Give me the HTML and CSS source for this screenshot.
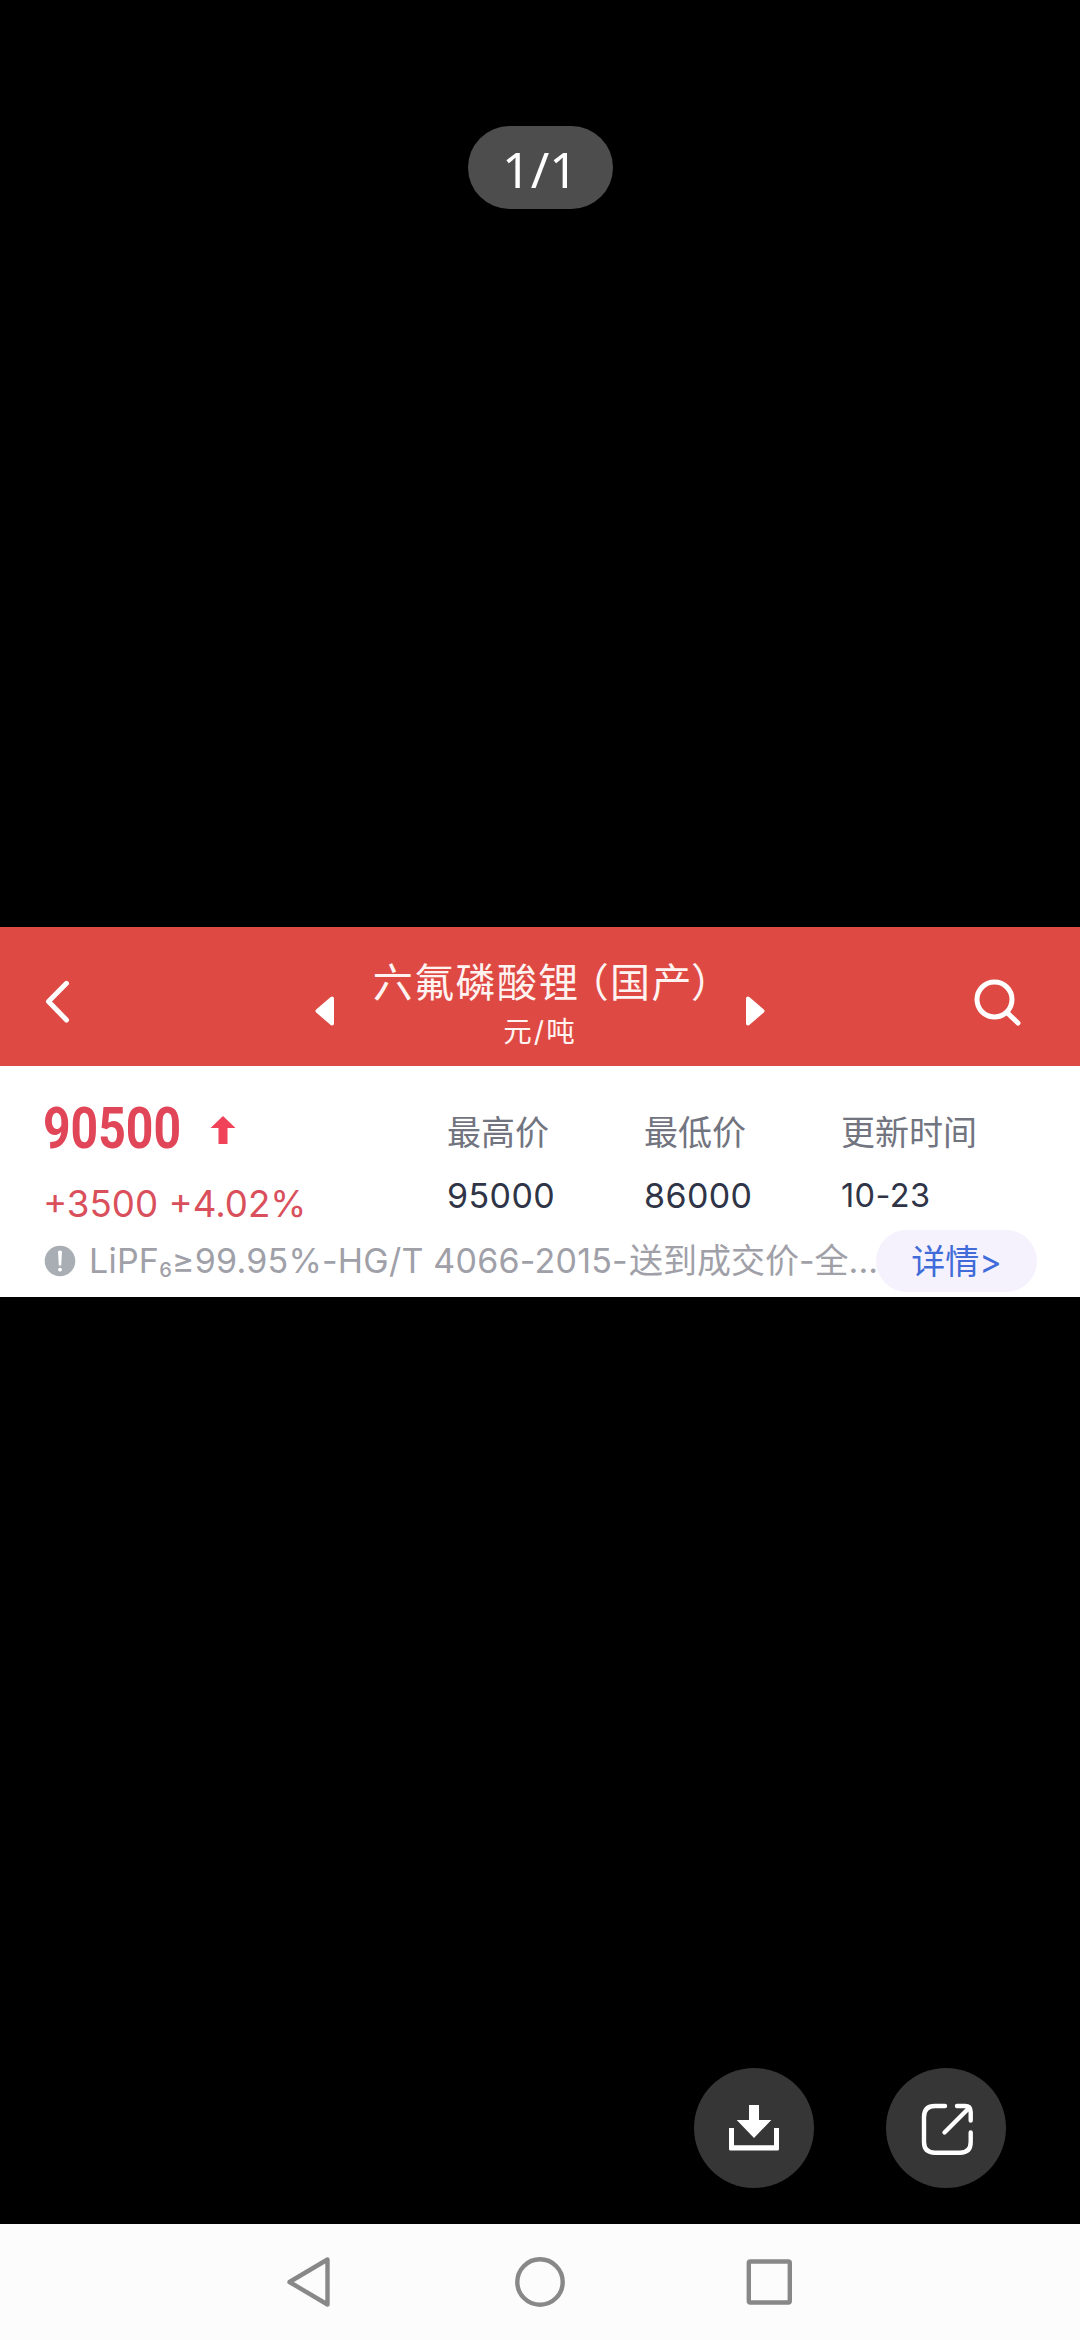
FILE: index.html
```html
<!DOCTYPE html>
<html lang="zh-CN">
<head>
    <meta charset="UTF-8">
    <title>六氟磷酸锂（国产）</title>
    <link rel="stylesheet" href="styles.css">
</head>
<body>

<div class="viewer">
    <div class="counter">1/1</div>

    <div class="photo">
        <div class="header">
            <svg class="back" width="32" height="48" viewBox="0 0 32 48">
                <path d="M26.5 5.3 L8.5 23.5 L26.5 42" />
            </svg>
            <svg class="prev" width="20" height="30" viewBox="0 0 20 30">
                <path d="M17 2.5 V27.5 L2.5 15 Z" />
            </svg>
            <div class="title">
                <div class="name">六氟磷酸锂<span class="open">（</span>国产<span class="close">）</span></div>
                <div class="unit">元/吨</div>
            </div>
            <svg class="next" width="20" height="30" viewBox="0 0 20 30">
                <path d="M3 2.5 V27.5 L17.5 15 Z" />
            </svg>
            <svg class="search" width="52" height="52" viewBox="0 0 52 52">
                <circle cx="20.5" cy="23.5" r="17.5" />
                <path d="M33.5 37 L44 47" />
            </svg>
        </div>

        <div class="quote">
            <div class="figures">
                <div class="current">
                    <div class="price">
                        <span class="value">90500</span>
                        <svg width="26" height="30" viewBox="0 0 26 30">
                            <path d="M13 1 L25.5 13 H17.5 V29 H8.5 V13 H0.5 Z" />
                        </svg>
                    </div>
                    <div class="change">+3500 +4.02%</div>
                </div>
                <dl class="stat">
                    <dt>最高价</dt>
                    <dd>95000</dd>
                </dl>
                <dl class="stat">
                    <dt>最低价</dt>
                    <dd>86000</dd>
                </dl>
                <dl class="stat time">
                    <dt>更新时间</dt>
                    <dd>10-23</dd>
                </dl>
            </div>
            <div class="spec">
                <svg width="32" height="32" viewBox="0 0 32 32">
                    <circle cx="16" cy="16" r="15.3" />
                    <path d="M14 6.5 Q16 4.5 18 6.5 L17.2 20.5 H14.8 Z" />
                    <circle class="dot" cx="16" cy="24.6" r="1.9" />
                </svg>
                <span class="spec-text">LiPF<span class="sub">6</span>≥99.95%-HG/T 4066-2015-<span class="terms">送到成交价-全...</span></span>
                <a class="more">详情&gt;</a>
            </div>
        </div>
    </div>

    <div class="actions">
        <button class="round">
            <svg width="120" height="120" viewBox="0 0 120 120">
                <path class="solid" d="M55 37 H65 V52 H77.3 L60 70 L42.7 52 H55 Z" />
                <path class="solid" d="M35 60 H40 V77.3 H80 V60 H85 V81 Q85 82.5 83.5 82.5 H36.5 Q35 82.5 35 81 Z" />
            </svg>
        </button>
        <button class="round">
            <svg width="120" height="120" viewBox="0 0 120 120">
                <path class="line" d="M59 38 H49 Q38 38 38 49 V74 Q38 84.7 49 84.7 H74 Q84.7 84.7 84.7 74 V64.5" />
                <path class="line" d="M71 38 H79 Q84.7 38 84.7 44 V52.5 M58.5 64.5 L83 40" />
            </svg>
        </button>
    </div>
</div>

<div class="navbar">
    <svg width="50" height="64" viewBox="0 0 50 64">
        <path d="M43.5 9.5 V54.5 L5.5 32 Z" />
    </svg>
    <svg width="54" height="64" viewBox="0 0 54 64">
        <circle cx="27" cy="32" r="22.7" />
    </svg>
    <svg width="50" height="64" viewBox="0 0 50 64">
        <rect x="2.8" y="11.5" width="41" height="41" rx="1.5" />
    </svg>
</div>

</body>
</html>
```
FILE: styles.css
```css
html, body {
    margin:  0;
    padding: 0;
}
body {
    display:        flex;
    flex-direction: column;
    width:          1080px;
    height:         2340px;
    background:     #000;
    font-family:    Inter, "Noto Sans CJK SC", sans-serif;
}
svg {
    display:     block;
    flex-shrink: 0;
}

.viewer {
    display:            grid;
    grid-template-rows: 1fr auto 1fr;
    flex:               1;
}
.counter {
    justify-self:   center;
    width:          145px;
    height:         83px;
    margin-top:     126px;
    line-height:    87px;
    border-radius:  42px;
    background:     #4d4d4d;
    color:          #fff;
    font-family:    "Noto Sans", sans-serif;
    font-size:      50px;
    text-align:     center;
}

.photo {
    height:     370px;
    background: #fff;
}
.header {
    display:     flex;
    align-items: center;
    box-sizing:  border-box;
    height:      139px;
    padding:     10px 54px 0 40px;
    background:  #de4a43;
    color:       #fff3f2;
}
.header svg {
    fill:            none;
    stroke:          #fff;
    stroke-width:    5;
    stroke-linecap:  round;
    stroke-linejoin: round;
}
.header .prev, .header .next {
    fill:         #fff;
    stroke-width: 4;
    margin-top:   18px;
}
.prev {
    margin-left: 243px;
}
.next {
    margin-right: 209px;
}
.title {
    flex:        1;
    padding-top: 6px;
    text-align:  center;
}
.name {
    padding-left:   5px;
    font-size:      40px;
    line-height:    54px;
    letter-spacing: 1.4px;
    white-space:    nowrap;
}
.open, .close {
    font-feature-settings: "halt";
}
.open {
    margin-left: 9px;
}
.close {
    margin-left: -2px;
}
.unit {
    font-size:      28.5px;
    line-height:    43px;
    letter-spacing: 2px;
}

.quote {
    height: 231px;
}
.figures {
    display:               grid;
    grid-template-columns: 404px 197px 197px 1fr;
    height:                164px;
    padding-left:          43px;
}
.price {
    display:     flex;
    align-items: center;
    height:      84px;
    padding-top: 20px;
    color:       #e14558;
}
.value {
    width:            167px;
    font-family:      Roboto, sans-serif;
    font-size:        58px;
    font-weight:      700;
    line-height:      60px;
    transform:        scaleX(0.83);
    transform-origin: left;
}
.price svg {
    margin-top: 4px;
    fill:       #f0435a;
}
.change {
    padding-top: 9px;
    color:       #d9505c;
    font-size:   36.7px;
    line-height: 50px;
}
.stat {
    margin:      0;
    padding-top: 42px;
}
.stat dt {
    color:       #727480;
    font-size:   34px;
    line-height: 50px;
}
.stat dd {
    margin:         0;
    padding-top:    11px;
    color:          #2f3547;
    font-size:      34px;
    line-height:    54px;
    letter-spacing: 0.4px;
}
.stat.time dd {
    font-size: 32.5px;
}

.spec {
    display:      flex;
    align-items:  center;
    height:       62px;
    padding:      0 43px 0 44px;
    color:        #9fa0a8;
    font-size:    34px;
    line-height:  50px;
    white-space:  nowrap;
}
.spec svg {
    fill: #a9aeb4;
}
.spec svg path, .spec .dot {
    fill: #fff;
}
.spec-text {
    width:          787px;
    margin-left:    13px;
    padding-top:    9px;
    letter-spacing: 0.22px;
}
.sub {
    font-size:      20px;
    font-weight:    500;
    vertical-align: -4px;
}
.terms {
    margin-left:    1px;
    letter-spacing: 0;
}
.more {
    width:         161px;
    height:        62px;
    line-height:   64px;
    border-radius: 31px;
    background:    #f5f2fe;
    color:         #406bd8;
    text-align:    center;
}

.actions {
    display:         flex;
    align-items:     flex-end;
    justify-content: flex-end;
    gap:             72px;
    padding:         0 74px 36px 0;
}
.round {
    width:         120px;
    height:        120px;
    padding:       0;
    border:        0;
    border-radius: 50%;
    background:    #363636;
}
.solid {
    fill: #fff;
}
.line {
    fill:           none;
    stroke:         #fff;
    stroke-width:   4.4;
    stroke-linecap: round;
}

.navbar {
    display:         flex;
    align-items:     center;
    justify-content: center;
    gap:             179px;
    height:          116px;
    background:      #fcfcfc;
}
.navbar svg {
    fill:            none;
    stroke:          #888;
    stroke-width:    4.4;
    stroke-linejoin: round;
}
```
